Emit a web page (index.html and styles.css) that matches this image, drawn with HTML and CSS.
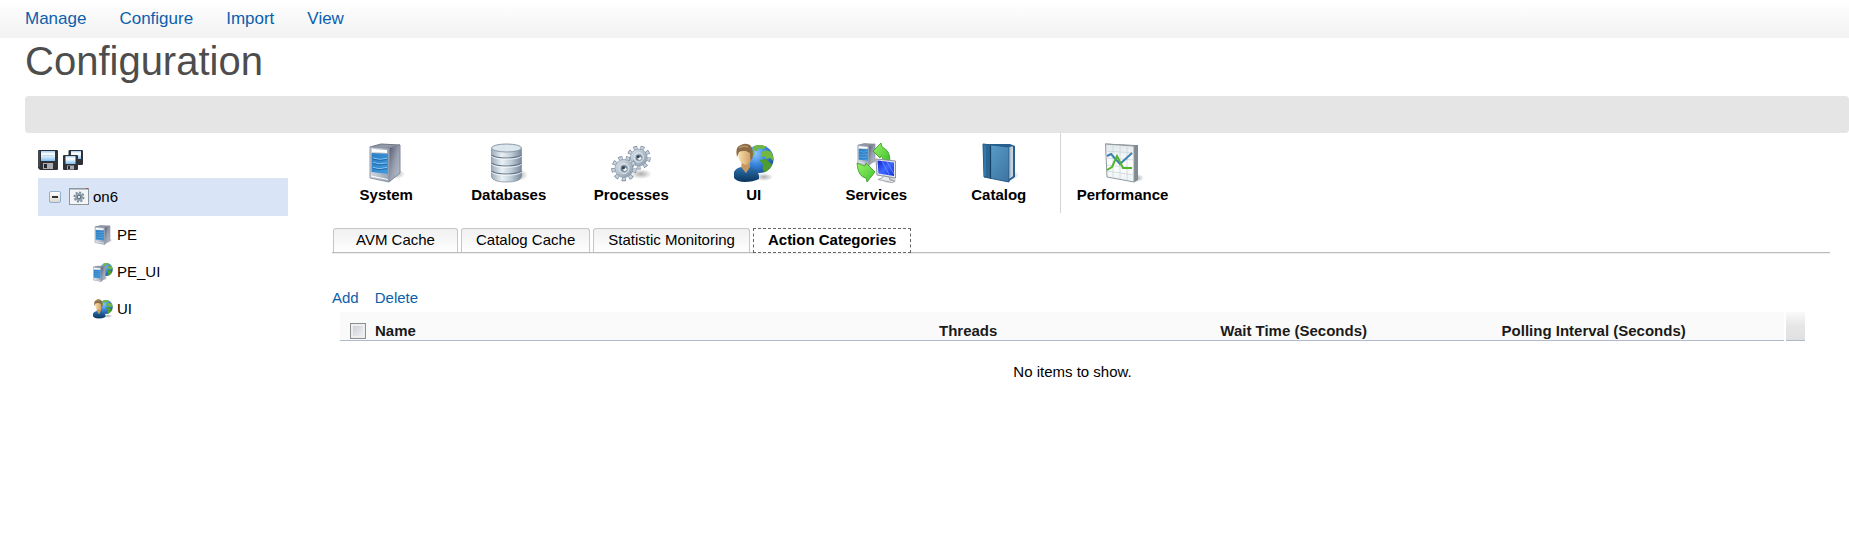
FILE: index.html
```html
<!DOCTYPE html>
<html lang="en">
<head>
<meta charset="utf-8">
<title>Configuration</title>
<link rel="stylesheet" href="styles.css">
</head>
<body>
<svg class="sprite" width="0" height="0" aria-hidden="true">
  <defs>
    <linearGradient id="g-steel" x1="0" x2="1"><stop offset="0" stop-color="#d3d9e1"/><stop offset="1" stop-color="#98a3b2"/></linearGradient>
    <linearGradient id="g-side" x1="0" x2="1" y1="0" y2="1"><stop offset="0" stop-color="#50576b"/><stop offset=".5" stop-color="#989fb0"/><stop offset="1" stop-color="#bcc3cf"/></linearGradient>
    <linearGradient id="g-panel" x1="0" x2="1" y1="0" y2="1"><stop offset="0" stop-color="#2c7ec4"/><stop offset="1" stop-color="#3f9be0"/></linearGradient>
    <linearGradient id="g-drum" x1="0" x2="1"><stop offset="0" stop-color="#9dadba"/><stop offset=".35" stop-color="#e9f0f5"/><stop offset=".65" stop-color="#c0ced9"/><stop offset="1" stop-color="#77899a"/></linearGradient>
    <linearGradient id="g-gear" x1="0" x2="1" y1="0" y2="1"><stop offset="0" stop-color="#dde5ed"/><stop offset="1" stop-color="#8797a8"/></linearGradient>
    <radialGradient id="g-globe" cx=".35" cy=".3" r=".8"><stop offset="0" stop-color="#8cc8ff"/><stop offset=".5" stop-color="#3a86dd"/><stop offset="1" stop-color="#124a94"/></radialGradient>
    <linearGradient id="g-shirt" x1="0" x2="0" y1="0" y2="1"><stop offset="0" stop-color="#2c73ac"/><stop offset="1" stop-color="#0a3560"/></linearGradient>
    <linearGradient id="g-face" x1="0" x2="1"><stop offset="0" stop-color="#fbe0ab"/><stop offset="1" stop-color="#c99a5e"/></linearGradient>
    <linearGradient id="g-green" x1="0" x2="1" y1="0" y2="1"><stop offset="0" stop-color="#9bf36a"/><stop offset="1" stop-color="#3fc02c"/></linearGradient>
    <linearGradient id="g-screen" x1="0" x2="1" y1="0" y2="1"><stop offset="0" stop-color="#1426c8"/><stop offset=".5" stop-color="#3d67ff"/><stop offset="1" stop-color="#1530dd"/></linearGradient>
    <linearGradient id="g-book" x1="0" x2="1" y1="0" y2="1"><stop offset="0" stop-color="#5ea3d2"/><stop offset="1" stop-color="#3d739f"/></linearGradient>
    <linearGradient id="g-paper" x1="0" x2="0" y1="0" y2="1"><stop offset="0" stop-color="#dfe7ea"/><stop offset=".5" stop-color="#fff"/><stop offset="1" stop-color="#eef2f4"/></linearGradient>
    <linearGradient id="g-disk" x1="0" x2="0" y1="0" y2="1"><stop offset="0" stop-color="#9fcdf2"/><stop offset=".3" stop-color="#fff"/><stop offset=".5" stop-color="#e4f2fd"/><stop offset="1" stop-color="#7dbcee"/></linearGradient>
    <radialGradient id="g-shadow"><stop offset="0" stop-color="#777" stop-opacity=".6"/><stop offset="1" stop-color="#777" stop-opacity="0"/></radialGradient>
  </defs>
  <symbol id="i-server" viewBox="0 0 40 40">
    <ellipse cx="30" cy="31" rx="9" ry="5" fill="url(#g-shadow)"/>
    <path d="M4 4 15 1 34 2 23 5z" fill="#9299a8" stroke="#6f7685"/>
    <path d="M23 5 34 2V30L23 39z" fill="url(#g-side)" stroke="#7f8798"/>
    <path d="M4 4 23 5V39L4 35z" fill="url(#g-steel)" stroke="#8d96a6"/>
    <path d="M6 6 21 7V10L6 9z" fill="#fff"/>
    <path d="M5.500 10 22 11V31L5.500 29z" fill="url(#g-panel)"/>
    <path d="M7 15Q13 17.500 21 15.500M7 19.500Q13 22 21 20M7 24.500Q13 27 21 24.500" fill="none" stroke="#8fcaf5"/>
    <path d="M7 16Q13 18.500 21 16.500M7 20.500Q13 23 21 21M7 25.500Q13 28 21 25.500" fill="none" stroke="#1d5c99" stroke-width=".8"/>
    <path d="M5 33 22 36.500" stroke="#fff"/>
  </symbol>
  <symbol id="i-database" viewBox="0 0 40 40">
    <ellipse cx="30" cy="32" rx="9" ry="6" fill="url(#g-shadow)"/>
    <path d="M2.500 5V34Q4 39 17.500 39T32.500 34V5z" fill="url(#g-drum)" stroke="#8696a4" stroke-width=".8"/>
    <path d="M2.500 12Q6 15 17.500 15T32.500 12M2.500 20Q6 23 17.500 23T32.500 20M2.500 28Q6 31 17.500 31T32.500 28" fill="none" stroke="#64788a" stroke-width="1.200"/>
    <path d="M2.500 13.200Q6 16.200 17.500 16.200T32.500 13.200M2.500 21.200Q6 24.200 17.500 24.200T32.500 21.200M2.500 29.200Q6 32.200 17.500 32.200T32.500 29.200" fill="none" stroke="#fff" stroke-opacity=".8"/>
    <ellipse cx="17.500" cy="5" rx="15" ry="4" fill="#dce6ed" stroke="#8b9aa8"/>
  </symbol>
  <symbol id="i-cog" viewBox="0 0 26 26">
    <circle cx="13" cy="13" r="10.500" fill="none" stroke="#75879a" stroke-width="4.400" pathLength="18" stroke-dasharray="1.100 .9"/>
    <circle cx="13" cy="13" r="10" fill="none" stroke="#c4d0db" stroke-width="4" pathLength="18" stroke-dasharray=".8 1.200" stroke-dashoffset="-.15"/>
    <circle cx="13" cy="13" r="9" fill="url(#g-gear)" stroke="#8494a5" stroke-width=".7"/>
    <circle cx="13" cy="13" r="5" fill="none" stroke="#e4eaf0"/>
    <circle cx="13" cy="13" r="3.200" fill="#6b7d90"/>
    <circle cx="13.800" cy="13.800" r="1.800" fill="#f6f8fa"/>
    <circle cx="12.500" cy="12.300" r="1.500" fill="#2f3e4e"/>
  </symbol>
  <symbol id="i-gears" viewBox="0 0 40 40">
    <ellipse cx="30" cy="31" rx="11" ry="5" fill="url(#g-shadow)"/>
    <use href="#i-cog" x="15.500" y="2" width="24.500" height="25"/>
    <use href="#i-cog" x="0" y="12" width="26" height="27"/>
  </symbol>
  <symbol id="i-globe" viewBox="0 0 30 30">
    <circle cx="15" cy="15" r="14.500" fill="url(#g-globe)"/>
    <path d="M9 1.800Q17-1 22 2.500L19 5 14 4 12 7 8 6zM17 8 22 6 27 7.500Q30 12 29.300 17L26 14 22 15 20 12 16 13z" fill="#72b83e"/>
    <path d="M15 16 21 15 26 19 28 21Q25 27 20 28.800L18 25 19 21z" fill="#4f9d2c"/>
    <path d="M5 7 9 6 10 10 7 13 3 12z" fill="#6fb550"/>
  </symbol>
  <symbol id="i-user" viewBox="0 0 40 40">
    <ellipse cx="30" cy="34" rx="9" ry="4" fill="url(#g-shadow)"/>
    <use href="#i-globe" x="11" y="1" width="29" height="30"/>
    <path d="M8 17H16V25L12 30 7 26z" fill="#c6965c"/>
    <path d="M0 29Q2 25 7 24L12 30 16 24Q24 26 25 33V36Q19 39 11 39T0 35z" fill="url(#g-shirt)"/>
    <path d="M4 9Q5 4 11 4T18 9Q19 20 11.500 22Q4 20 4 9z" fill="url(#g-face)"/>
    <path d="M3 14Q1 4 6 2.500 10-.5 15 1.500 20 4 18.500 15L16.500 18 16 10 12 8Q7 7.500 5 9z" fill="#8a6b45"/>
    <path d="M5 5Q9 2 14 4" fill="none" stroke="#b5966a" stroke-width="1.500"/>
  </symbol>
  <symbol id="i-server-globe" viewBox="0 0 40 40">
    <use href="#i-globe" x="13" y="0" width="27" height="30"/>
    <use href="#i-server" x="-3" y="7" width="33" height="33"/>
  </symbol>
  <symbol id="i-services" viewBox="0 0 40 40">
    <ellipse cx="34" cy="37" rx="8" ry="4" fill="url(#g-shadow)"/>
    <use href="#i-server" x="-1" y="0" width="24" height="23"/>
    <path d="M17 8 25 0 26 4Q34 7 34 18 30 16 27 17 27 14 25 13L24 15z" fill="url(#g-green)" stroke="#329a20" stroke-width=".8"/>
    <path d="M1 20Q5 22 9 23L10 20 19 29 11 39 10 35Q2 34 1 20z" fill="url(#g-green)" stroke="#329a20" stroke-width=".8"/>
    <path d="M20 16 39.500 18V35L21 32z" fill="#e5e8ee" stroke="#8c93a3"/>
    <path d="M21.500 17.500 38 19.500V33L22.500 30.500z" fill="url(#g-screen)"/>
    <path d="M26 18 33 31.500M31 18.800 38 31" stroke="#6f95ff" stroke-width=".8"/>
    <path d="M27 33 33 34 34 37 39 38 36 39.500 22 36.500 26 35z" fill="#e8eaee" stroke="#868d98" stroke-width=".7"/>
  </symbol>
  <symbol id="i-book" viewBox="0 0 40 40">
    <ellipse cx="31" cy="32" rx="9" ry="5" fill="url(#g-shadow)"/>
    <path d="M4 1 31 1 36 3V34L29 39z" fill="#265f91"/>
    <path d="M30 4 34 3.500V33L30 36z" fill="#dbe4ea"/>
    <path d="M31.500 4V34M33 4V33" stroke="#9cabb8" stroke-width=".6"/>
    <path d="M4 1 30 4V39L5 34z" fill="url(#g-book)" stroke="#265a86"/>
    <path d="M4 1 12 2V35.500L5 34z" fill="#276695"/>
    <path d="M11.500 2.500V35" stroke="#173f63" stroke-width="1.200"/>
    <path d="M6 2.500V33" stroke="#5798c8" stroke-width=".7"/>
  </symbol>
  <symbol id="i-chart" viewBox="0 0 40 40">
    <ellipse cx="34" cy="35" rx="7" ry="4" fill="url(#g-shadow)"/>
    <path d="M2 .500 32 2 35 2V37L31 39.500z" fill="#808a92"/>
    <path d="M2.500 1 31 3V39L4 34z" fill="url(#g-paper)" stroke="#8f9aa0"/>
    <path d="M3 8 31 10M3 15 31 17M4 22 31 25M4 28 31 32M10 2V35M17 2.500V36M24 3V37" stroke="#ccd6da" stroke-width=".8"/>
    <path d="M4 13 8 11 17 21 29 10" fill="none" stroke="#3c82b4" stroke-width="2"/>
    <path d="M4 27 9 24 14 13 20 25 29 25" fill="none" stroke="#51b52e" stroke-width="2"/>
  </symbol>
  <symbol id="i-floppy" viewBox="0 0 20 20">
    <path d="M0 1Q0 0 1 0H19Q20 0 20 1V19Q20 20 19 20H2L0 18z" fill="#303238"/>
    <path d="M1 1V17" stroke="#5a5e66"/>
    <rect x="3" y="1" width="14" height="10" fill="url(#g-disk)"/>
    <path d="M4 5.500H16" stroke="#b5cde0" stroke-width=".7"/>
    <rect x="5" y="13" width="10" height="6" fill="#a9acb1"/>
    <rect x="6" y="14" width="3" height="4" fill="#26282c"/>
  </symbol>
  <symbol id="i-floppies" viewBox="0 0 20 20">
    <rect x="5.500" width="14.500" height="15" rx="1" fill="#303238"/>
    <rect x="8" y="1" width="10" height="8" fill="url(#g-disk)"/>
    <rect y="5" width="15" height="15" rx="1" fill="#303238"/>
    <rect x="2.500" y="6" width="10" height="8" fill="url(#g-disk)"/>
    <rect x="4" y="15.500" width="7" height="4" fill="#a9acb1"/>
    <rect x="5" y="16" width="2" height="3" fill="#26282c"/>
  </symbol>
  <symbol id="i-window" viewBox="0 0 20 20">
    <rect x=".5" y="1.500" width="19" height="16" fill="#f3f5f6" stroke="#8e979e"/>
    <path d="M1 2.500H19" stroke="#b9c3cb"/>
    <rect x="17" y="1" width="2" height="1" fill="#c4473c"/>
    <circle cx="10" cy="10" r="4.500" fill="none" stroke="#7f8d9b" stroke-width="2" pathLength="16" stroke-dasharray="1.200 .8"/>
    <circle cx="10" cy="10" r="4" fill="#94a3b2"/>
    <circle cx="10" cy="10" r="1.800" fill="#dfe6ec" stroke="#566677"/>
  </symbol>
</svg>

<nav class="menu">
  <a href="#manage">Manage</a>
  <a href="#configure">Configure</a>
  <a href="#import">Import</a>
  <a href="#view">View</a>
</nav>

<header class="heading">
  <h1>Configuration</h1>
  <div class="band"></div>
</header>

<div class="layout">
  <aside class="sidebar">
    <div class="actions">
      <button type="button" aria-label="Save"><svg class="icon-small"><use href="#i-floppy"/></svg></button>
      <button type="button" aria-label="Save all"><svg class="icon-small"><use href="#i-floppies"/></svg></button>
    </div>
    <ul class="tree">
      <li>
        <div class="node node-root">
          <button type="button" class="toggle" aria-label="Collapse on6" aria-expanded="true"></button>
          <svg class="icon-small"><use href="#i-window"/></svg>
          <a href="#on6">on6</a>
        </div>
        <ul class="tree">
          <li class="node node-child"><svg class="icon-small"><use href="#i-server"/></svg><a href="#pe">PE</a></li>
          <li class="node node-child"><svg class="icon-small"><use href="#i-server-globe"/></svg><a href="#pe-ui">PE_UI</a></li>
          <li class="node node-child"><svg class="icon-small"><use href="#i-user"/></svg><a href="#ui-node">UI</a></li>
        </ul>
      </li>
    </ul>
  </aside>

  <main class="content">
    <nav class="toolbar">
      <div class="group">
        <a href="#system"><svg class="icon"><use href="#i-server"/></svg>System</a>
        <a href="#databases"><svg class="icon"><use href="#i-database"/></svg>Databases</a>
        <a href="#processes"><svg class="icon"><use href="#i-gears"/></svg>Processes</a>
        <a href="#ui"><svg class="icon"><use href="#i-user"/></svg>UI</a>
        <a href="#services"><svg class="icon"><use href="#i-services"/></svg>Services</a>
        <a href="#catalog"><svg class="icon"><use href="#i-book"/></svg>Catalog</a>
      </div>
      <div class="group group-last">
        <a href="#performance"><svg class="icon"><use href="#i-chart"/></svg>Performance</a>
      </div>
    </nav>

    <div class="tabs" role="tablist">
      <button type="button" class="tab" role="tab">AVM Cache</button>
      <button type="button" class="tab" role="tab">Catalog Cache</button>
      <button type="button" class="tab" role="tab">Statistic Monitoring</button>
      <button type="button" class="tab tab-active" role="tab" aria-selected="true">Action Categories</button>
    </div>

    <div class="commands">
      <a href="#add">Add</a>
      <a href="#delete">Delete</a>
    </div>

    <table class="grid">
      <thead>
        <tr>
          <th class="col-check"><input type="checkbox" class="check" aria-label="Select all"></th>
          <th class="col-name">Name</th>
          <th class="col-value">Threads</th>
          <th class="col-value">Wait Time (Seconds)</th>
          <th>Polling Interval (Seconds)</th>
          <th class="col-end"></th>
        </tr>
      </thead>
      <tbody>
        <tr><td class="empty" colspan="6">No items to show.</td></tr>
      </tbody>
    </table>
  </main>
</div>
</body>
</html>
```

FILE: styles.css
```css
* { box-sizing: border-box; }

body {
  margin: 0;
  background: #fff;
  color: #000;
  font: 15px/18px "Liberation Sans", Arial, sans-serif;
}

a { color: inherit; text-decoration: none; }

button {
  border: 0;
  padding: 0;
  background: none;
  color: inherit;
  font: inherit;
}

.sprite { display: block; }

.menu {
  display: flex;
  align-items: center;
  gap: 33px;
  height: 38px;
  padding: 0 25px;
  background: linear-gradient(#fff, #f2f2f2);
  color: #0b60ad;
  font-size: 17px;
}

.heading { padding-left: 25px; }

h1 {
  margin: 0;
  padding-bottom: 12px;
  color: #4d4d4d;
  font-size: 40px;
  font-weight: 400;
  line-height: 46px;
}

.band {
  height: 37px;
  border-radius: 4px;
  background: #e5e5e5;
}

.layout { display: flex; }

.sidebar {
  flex: none;
  width: 288px;
  padding: 17px 0 0 38px;
}

.actions {
  display: flex;
  gap: 5px;
  margin-bottom: 8px;
}

.icon-small {
  display: block;
  width: 20px;
  height: 20px;
}

.tree {
  margin: 0;
  padding: 0;
  list-style: none;
}

.node {
  display: flex;
  align-items: center;
  gap: 4px;
}

.node-root {
  height: 38px;
  padding-left: 11px;
  background: #d9e4f6;
}

.node-child {
  height: 37px;
  padding-left: 55px;
}

.toggle {
  width: 12px;
  height: 12px;
  margin-right: 4px;
  border: 1px solid #8fb0c8;
  border-radius: 2px;
  background:
    linear-gradient(#333, #333) center / 6px 2px no-repeat,
    linear-gradient(#fff, #ddd8cf);
}

.content {
  flex: 1;
  min-width: 0;
  padding: 0 19px 0 44px;
}

.toolbar {
  display: flex;
  margin-left: -7px;
  font-weight: 700;
}

.group {
  display: flex;
  width: 735px;
}

.group-last {
  width: 124px;
  height: 80px;
  border-left: 1px solid #d4d4d4;
}

.group a {
  display: flex;
  flex: 1;
  flex-direction: column;
  align-items: center;
  gap: 3px;
  padding-top: 10px;
}

.icon { width: 40px; height: 40px; }

.tabs {
  display: flex;
  gap: 3px;
  margin-top: 15px;
  padding-left: 1px;
  border-bottom: 1px solid #bbb;
  box-shadow: 0 1px #eee;
}

.tab {
  min-width: 125px;
  height: 24px;
  padding: 0 14px 2px;
  border: 1px solid #c6c6c6;
  border-bottom: 0;
  border-radius: 3px 3px 0 0;
  background: linear-gradient(#f0f0f0, #fff);
}

.tab-active {
  height: 25px;
  margin-bottom: -1px;
  border: 1px dashed #666;
  border-radius: 0;
  background: #fff;
  font-weight: 700;
}

.commands {
  display: flex;
  gap: 16px;
  margin-top: 36px;
  color: #0b60ad;
}

.grid {
  width: calc(100% - 33px);
  margin: 5px 25px 0 8px;
  border-collapse: collapse;
  table-layout: fixed;
}

th {
  height: 28px;
  padding: 0 0 0 5px;
  border-bottom: 1px solid #b0b9cd;
  background: #fafafa;
  color: #1a1a1a;
  line-height: 18px;
  text-align: left;
  vertical-align: bottom;
}

.col-check { width: 30px; padding-left: 10px; }
.col-name { width: 38.5%; }
.col-value { width: 19.2%; }

.col-end {
  width: 20px;
  border-left: 2px solid #fff;
  background: linear-gradient(#fafafa, #e6e6e6 50%, #e0e0e0);
}

.check {
  display: block;
  width: 16px;
  height: 16px;
  margin: 0 0 1px;
  appearance: none;
  border: 1px solid #8a8f92;
  background: linear-gradient(135deg, #c5cad1, #f4f5f6);
  box-shadow: inset 0 0 0 2px #eee;
}

.empty {
  padding: 22px 0;
  text-align: center;
}
```
